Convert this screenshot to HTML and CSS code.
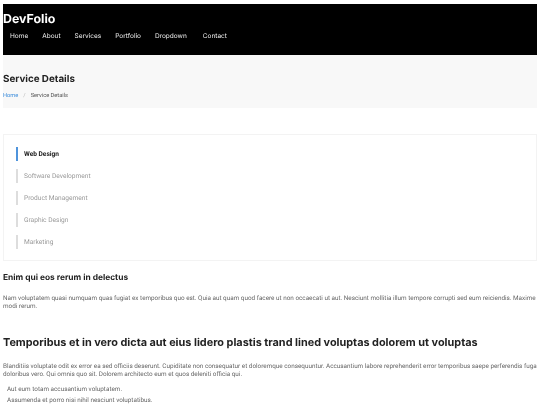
FILE: index.html
```html
<!DOCTYPE html>
<html lang="en">
<head>
<meta charset="utf-8">
<title>Service Details</title>
<link rel="stylesheet" href="styles.css">
</head>
<body>
<header class="header">
  <div class="logo">DevFolio</div>
  <nav class="nav">
    <a>Home</a><a>About</a><a>Services</a><a>Portfolio</a><a>Dropdown</a><a class="contact">Contact</a>
  </nav>
</header>
<section class="crumbs">
  <h2>Service Details</h2>
  <div class="trail"><a>Home</a><span class="sep">/</span><span>Service Details</span></div>
</section>
<main class="main">
  <div class="card">
    <a class="item active">Web Design</a>
    <a class="item">Software Development</a>
    <a class="item">Product Management</a>
    <a class="item">Graphic Design</a>
    <a class="item">Marketing</a>
  </div>
  <h4 class="sub">Enim qui eos rerum in delectus</h4>
  <p class="text first">Nam voluptatem quasi numquam quas fugiat ex temporibus quo est. Quia aut quam quod facere ut non occaecati ut aut. Nesciunt mollitia illum tempore corrupti sed eum reiciendis. Maxime modi rerum.</p>
  <h3 class="title">Temporibus et in vero dicta aut eius lidero plastis trand lined voluptas dolorem ut voluptas</h3>
  <p class="text">Blanditiis voluptate odit ex error ea sed officiis deserunt. Cupiditate non consequatur et doloremque consequuntur. Accusantium labore reprehenderit error temporibus saepe perferendis fuga doloribus vero. Qui omnis quo sit. Dolorem architecto eum et quos deleniti officia qui.</p>
  <ul class="list">
    <li>Aut eum totam accusantium voluptatem.</li>
    <li>Assumenda et porro nisi nihil nesciunt voluptatibus.</li>
  </ul>
</main>
</body>
</html>
```
FILE: styles.css
```css
html, body { height: 405px; overflow: hidden; background: #fff; }
body { margin: 0; padding: 3px 3px 0; box-sizing: border-box; font-family: Roboto, sans-serif; color: #444; font-size: 6px; text-rendering: geometricPrecision; filter: blur(.25px); }
.header { background: #000; height: 51.5px; padding-top: 7.5px; box-sizing: border-box; margin-top: .5px; }
.logo { font-family: Inter, sans-serif; font-weight: 700; font-size: 12.4px; line-height: 15px; color: #fff; }
.nav { display: flex; gap: 14px; padding: 6px 0 0 7px; font-family: Inter, sans-serif; font-size: 6.5px; line-height: 8px; color: #eee; }
.nav .contact { margin-left: 2px; }
.crumbs { background: #f8f8f8; height: 53px; padding-top: 18px; box-sizing: border-box; }
.crumbs h2 { margin: 0; font-family: Inter, sans-serif; font-weight: 700; font-size: 9.8px; line-height: 13px; color: #222; }
.trail { display: flex; margin-top: 6px; font-size: 5.7px; line-height: 8px; color: #555; }
.trail a { color: #3f8fdc; }
.sep { color: #bbb; margin: 0 5px; }
.main { padding-top: 26px; }
.card { border: 1px solid #f3f3f3; height: 127px; box-sizing: border-box; padding: 12px 12px 0; display: flex; flex-direction: column; gap: 8px; }
.item { border-left: 2px solid #ddd; height: 14px; line-height: 14px; padding-left: 6px; font-size: 6.6px; color: #999; }
.item.active { border-left-color: #4f94dc; color: #222; font-weight: 700; }
.sub { margin: 12px 0 0; font-family: Inter, sans-serif; font-weight: 700; font-size: 8.4px; line-height: 11px; color: #222; }
.text { margin: 0; font-size: 6.35px; line-height: 8px; color: #666; }
.text.first { margin-top: 10px; }
.title { margin: 25px 0 0; font-family: Inter, sans-serif; font-weight: 700; font-size: 10.86px; line-height: 15px; color: #222; }
.text:not(.first) { margin-top: 11.5px; }
.list { list-style: none; margin: 7px 0 0; padding: 0 0 0 4px; font-size: 6.35px; color: #666; line-height: 8px; }
.list li { margin-bottom: 3px; }
```
